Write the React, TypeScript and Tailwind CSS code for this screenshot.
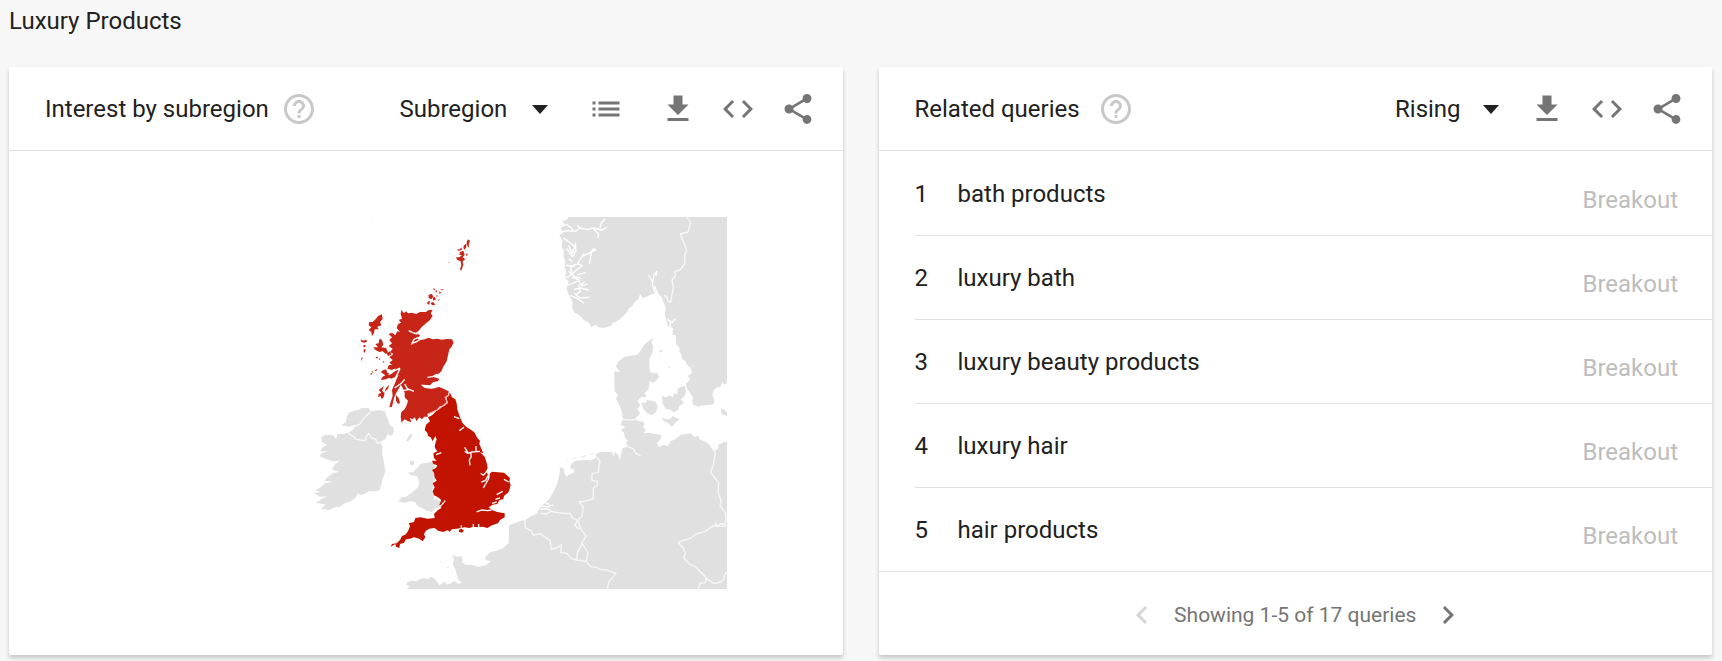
import { ReactNode } from "react";
import {
  MdChevronLeft,
  MdChevronRight,
  MdCode,
  MdFileDownload,
  MdHelpOutline,
  MdList,
  MdShare,
} from "react-icons/md";

interface Query {
  rank: number;
  text: string;
  value: string;
}

const queries: Query[] = [
  { rank: 1, text: "bath products", value: "Breakout" },
  { rank: 2, text: "luxury bath", value: "Breakout" },
  { rank: 3, text: "luxury beauty products", value: "Breakout" },
  { rank: 4, text: "luxury hair", value: "Breakout" },
  { rank: 5, text: "hair products", value: "Breakout" },
];

// countries without data
const land = [
  // Norway and Sweden
  "M806 33L1281 33L1281 528L1275 536L1268 530L1262 538L1264 543L1250 544L1240 556L1237 566L1241 576L1243 588L1238 596L1222 597L1205 599L1196 602L1180 597L1176 584L1180 577L1170 560L1160 545L1157 532L1165 527L1172 520L1163 510L1175 502L1173 485L1164 480L1156 466L1146 458L1144 445L1138 438L1139 424L1130 418L1128 402L1127 388L1118 386L1118 366L1104 360L1100 344L1094 324L1098 306L1090 288L1084 272L1076 264L1070 250L1064 262L1052 266L1040 272L1028 276L1020 264L1016 278L1004 288L998 300L988 306L980 320L968 332L956 342L942 350L938 348L936 358L924 362L912 366L896 364L888 356L880 360L874 364L868 352L852 342L838 328L824 320L816 304L818 288L812 276L804 262L800 246L806 228L796 214L798 198L794 182L796 166L790 150L792 136L784 120L788 104L778 88L790 80L782 66L796 58L786 46L800 42Z",
  // Jutland, Germany and the mainland down to Brittany
  "M1062 394L1054 410L1060 420L1057 442L1048 458L1048 484L1050 498L1062 502L1072 501L1077 512L1070 522L1062 530L1048 526L1046 548L1034 562L1040 572L1022 574L1012 586L1022 598L1012 608L1020 622L1006 638L1014 646L1030 646L1034 656L1028 664L1038 672L1030 682L1048 680L1062 684L1084 686L1082 700L1070 712L1078 722L1092 716L1104 720L1112 706L1126 700L1142 686L1160 684L1172 682L1182 692L1196 690L1198 700L1212 706L1222 710L1230 720L1240 734L1254 728L1256 716L1268 710L1281 706L1281 1151L318 1151L330 1140L318 1138L322 1128L338 1124L350 1126L360 1120L372 1116L384 1120L392 1112L404 1118L412 1128L418 1138L434 1128L442 1136L456 1130L462 1124L474 1134L486 1130L474 1120L470 1104L466 1088L458 1076L462 1060L456 1046L470 1052L484 1050L488 1058L486 1068L496 1076L514 1076L536 1082L556 1078L574 1066L556 1062L556 1052L572 1038L590 1034L610 1026L626 1012L627 958L652 948L674 942L694 930L712 922L716 912L722 902L738 888L750 876L762 854L772 832L778 808L780 786L786 784L792 790L794 804L800 812L806 806L820 802L824 792L810 786L812 776L826 764L850 762L874 762L886 756L890 742L904 738L936 738L940 752L944 738L956 748L960 766L962 748L968 726L984 722L978 712L984 704L974 694L972 680L962 672L976 664L962 656L968 642L966 618L958 598L948 578L954 568L944 556L943 496L960 498L948 482L956 466L974 452L1000 448L1012 446L1022 434L1034 414L1048 404Z",
  // Funen, Zealand and the small Danish islands
  "M1024 588L1036 592L1042 582L1056 584L1068 588L1073 602L1068 618L1056 628L1042 622L1030 610Z",
  "M1086 570L1098 574L1110 568L1118 574L1122 562L1134 564L1132 550L1142 542L1154 540L1158 556L1154 570L1142 580L1152 590L1138 600L1134 612L1122 620L1114 612L1096 608L1088 592Z",
  "M1084 634L1098 640L1112 638L1118 630L1138 640L1128 648L1116 662L1104 652L1090 644Z",
  "M1076 434L1090 432L1082 440ZM1264 606L1281 618L1281 630L1264 624ZM1104 484L1114 484L1108 487Z",
  // Ireland
  "M64 692L78 686L100 688L108 700L112 684L130 684L150 678L162 668L168 656L148 662L124 658L138 648L140 634L146 620L162 614L176 612L186 606L206 606L212 616L236 612L254 616L258 626L264 640L268 656L280 664L282 678L274 690L262 684L256 700L240 708L248 722L246 742L250 758L256 796L248 820L240 852L224 856L208 856L196 862L184 868L174 862L166 876L152 886L134 892L120 902L104 904L88 912L72 910L62 908L78 896L56 892L46 892L66 878L82 870L60 872L42 862L64 856L44 854L64 842L74 832L100 828L72 824L84 812L98 802L118 798L96 790L104 776L120 764L98 766L76 758L58 750L64 742L84 736L62 736L68 724L80 716L66 708Z",
  // Wales
  "M324 800L340 798L350 788L362 774L378 770L398 768L404 780L406 810L402 830L398 852L404 878L422 886L418 904L404 908L396 918L380 914L366 906L352 900L346 888L330 886L312 890L294 886L304 880L296 876L318 872L338 858L354 844L358 828L352 810L334 808Z",
  "M328 764L342 766L342 776L332 778Z",
  // Isle of Man, Channel Islands, Faroes
  "M318 704L328 688L338 682L334 696L324 706ZM420 1064L426 1068L422 1068ZM438 1082L450 1083L442 1085ZM214 34L224 42L218 38Z",
  // Frisian islands
  "M798 764L806 760L802 764ZM814 758L830 754L826 758ZM836 752L860 748L854 752ZM866 746L884 740L880 744Z",
];

const scotland = [
  "M304 312L312 322L318 316L324 322L336 320L348 324L360 318L378 318L386 312L398 312L392 322L398 330L390 342L378 352L366 362L356 374L348 380L360 388L352 398L362 402L374 400L386 395L398 400L412 398L426 401L440 399L456 400L461 410L454 424L448 430L444 448L440 466L430 482L424 496L412 506L398 512L418 518L414 526L400 528L390 538L372 536L362 536L374 546L394 548L408 546L416 542L430 548L446 556L446 566L438 574L440 588L430 600L420 600L410 612L396 618L382 624L384 632L372 632L366 640L358 634L350 646L344 634L338 640L330 636L334 648L324 646L314 640L306 648L310 660L304 646L302 632L304 618L314 610L320 598L324 584L314 574L314 560L308 546L302 536L296 548L288 562L282 576L276 602L268 604L272 588L278 570L276 552L284 534L290 518L296 506L284 514L274 518L262 512L278 500L288 488L276 490L264 484L278 478L268 470L278 462L268 454L280 444L270 438L278 428L266 420L276 412L268 402L276 394L266 384L276 380L286 388L292 376L300 378L290 366L294 354L304 350L296 342L306 338L302 324Z",
  // Outer Hebrides
  "M246 325L248 340L240 348L244 358L232 362L236 370L224 370L222 382L216 390L214 378L206 372L214 364L206 358L208 348L218 348L228 338L234 330Z",
  "M182 400L190 404L198 401L202 406L194 410L184 408ZM190 418L196 416L196 424L191 424ZM191 430L197 430L195 440L191 438ZM184 456L189 454L184 466Z",
  // Skye, Mull, Islay, Jura
  "M238 398L246 402L250 416L244 424L258 426L264 438L258 444L248 436L238 438L226 432L220 424L234 424L226 414L236 412ZM260 442L270 436L274 446L264 450Z",
  "M242 498L250 492L258 490L262 500L274 504L270 514L258 520L242 522L248 512L256 508ZM266 478L278 476L288 484L276 492L262 488Z",
  "M252 540L246 554L254 562L250 576L244 578L242 570L234 574L236 564L244 560L236 552L244 546ZM268 536L264 548L254 558L258 546ZM288 568L296 576L300 590L294 594L288 584Z",
  "M210 504L220 498L214 506ZM222 496L232 488L230 494ZM226 454L234 452L232 458ZM236 456L242 460L238 462ZM248 464L254 468L250 470ZM214 496L220 494L216 498Z",
  // Orkney
  "M386 266L396 264L400 272L394 280L386 276ZM398 276L404 272L408 280L400 284ZM382 288L390 284L388 296L382 294ZM392 290L400 288L406 296L396 298ZM400 246L406 250L402 254ZM406 256L412 252L410 260ZM420 250L432 250L426 253ZM418 256L424 260L418 264ZM408 270L412 266L412 274ZM412 282L420 280L416 284Z",
  // Shetland
  "M504 100L510 104L506 116L508 126L502 120L500 108ZM494 116L500 112L498 126L492 132L490 122ZM480 130L484 124L486 132L474 134L472 130ZM480 138L490 134L494 146L488 154L496 160L488 166L490 176L484 194L480 190L484 178L482 166L472 162L468 154L478 154L486 148L478 146ZM496 142L504 146L500 150ZM445 168L449 170L446 171Z",
];

const england = [
  "M450 560L456 574L466 580L470 592L472 610L480 634L488 652L500 664L514 672L524 680L532 696L540 704L538 714L550 742L540 738L554 752L560 770L563 786L558 796L564 806L576 797L612 800L630 816L628 826L632 838L626 858L612 870L610 880L598 882L592 894L578 896L566 904L576 912L592 918L614 922L614 934L600 942L594 952L576 958L562 966L548 962L534 964L520 962L508 966L494 964L484 966L470 968L456 970L448 978L444 972L430 978L414 974L404 966L388 968L378 974L372 984L376 994L368 1006L358 998L342 994L330 998L318 1000L312 1010L300 1014L298 1026L288 1022L286 1014L272 1022L276 1014L290 1012L300 1002L306 990L316 986L324 976L330 960L326 952L342 948L346 936L362 934L382 938L404 936L402 924L414 912L424 906L418 896L424 882L414 874L402 868L398 856L404 844L398 832L410 824L404 814L402 800L396 792L408 786L412 778L400 774L396 764L410 764L402 756L400 742L412 736L404 724L406 712L410 700L406 690L398 706L392 694L384 690L382 680L374 672L378 656L390 646L384 634L396 628L410 614L424 604L438 596L442 588L440 574Z",
  // Isle of Wight
  "M476 972L484 968L492 974L486 980L478 978Z",
];

// country borders
const borders = [
  "M1160 33L1172 50L1164 78L1141 84L1160 132L1154 150L1154 174L1140 192L1124 196L1126 210L1116 222L1120 246L1112 288L1104 286L1100 272L1092 268",
  "M966 640L990 642L1010 640L1030 646",
  "M982 722L1000 728L1008 742L1022 750",
  "M886 750L900 764L896 788L894 800L876 802L876 824L892 826L892 838L880 846L880 878L862 884L838 888L850 904L846 930L834 944L824 956L832 966L842 968L858 990L846 1010L842 1022L832 1040L830 1060",
  "M722 922L740 924L752 916L774 920L792 922L810 922L818 936L834 944L842 968",
  "M674 942L676 966L694 974L700 988L720 982L736 994L750 1002L754 1030L774 1024L784 1016L782 1040L800 1042L814 1058L830 1062L858 1066L872 1082L890 1084L898 1090L920 1092L948 1102L926 1128L922 1151",
  "M846 1012L858 1030L864 1042L858 1066",
  "M1240 712L1246 742L1240 776L1232 800L1256 830L1254 856L1264 888L1260 900L1276 920L1278 940L1272 962L1244 958L1236 962L1216 976L1188 984L1170 998L1140 1006L1136 1012L1148 1024L1156 1040L1152 1056L1170 1076L1186 1082L1220 1116L1216 1130L1200 1132L1194 1151",
  "M1246 950L1252 962L1264 952L1281 960",
  "M1220 1118L1242 1132L1256 1130L1270 1122L1274 1106L1281 1098",
  "M142 676L152 688L162 692L168 700L180 702L196 704L200 690L206 682L214 696L228 700L230 710L248 710",
  "M148 672L160 662L180 654L192 636L212 618",
];

// fjords, firths and estuaries
const inlets = [
  "M784 78L804 74L826 76L840 66L862 70L880 66L906 72L920 64M880 68L896 84L894 96M900 66L904 50L916 38M840 66L832 58M820 74L812 64L796 54",
  "M790 96L808 108L826 124L814 138L806 118M826 110L828 136L812 142M800 128L818 152L826 140",
  "M798 178L816 180L832 174L846 152L866 142L890 130M874 140L868 174M846 152L852 142M818 168L806 158M870 140L884 126",
  "M800 214L816 204L832 190L846 180L832 172M816 204L812 186L824 178M832 206L858 200M816 214L838 222M806 196L824 212L842 216",
  "M800 238L818 232L836 224L846 240L862 234M822 250L842 246L866 252M836 236L840 258L828 266M810 268L830 276L852 292M822 262L840 276L868 274M842 240L854 226",
  "M1064 258L1058 240L1056 224L1046 208M1058 230L1062 206L1070 196L1068 210M1064 240L1070 258M1102 340L1116 350L1126 338M1110 344L1112 374L1120 368",
  "M720 910L736 908L752 912M724 900L744 902L760 896M736 890L748 896",
  "M352 384L338 380L326 374M334 416L342 400L356 394M334 412L348 408L360 400",
  "M382 514L398 512L412 504M266 506L284 494L300 486M286 516L300 488M284 546L304 532L314 520M314 534L322 548L342 556M304 546L310 554L328 550",
  "M494 736L504 742L516 738L540 736M512 738L514 752L508 762L510 778M504 740L494 724M528 738L528 720M478 674L492 664M462 632L478 638",
  "M568 800L566 818L550 846M560 796L550 808L542 802M566 806L556 824L544 828M530 918L546 912L562 914L574 912M612 820L626 828M408 746L424 740M420 902L436 884",
  "M608 856L590 866M600 876L586 880M590 888L576 892M520 954L520 966M536 954L536 966M484 958L484 966",
];

function HeaderSelect({ label, options, width }: { label: string; options: string[]; width: string }) {
  return (
    <div className={`relative ${width}`}>
      <select
        aria-label={label}
        className="w-full appearance-none bg-transparent text-2xl leading-8 text-[#212121] focus:outline-none"
      >
        {options.map((option) => (
          <option key={option}>{option}</option>
        ))}
      </select>
      <svg
        viewBox="0 0 16 9"
        className="pointer-events-none absolute right-5 top-3 h-[9px] w-4 fill-[#212121]"
      >
        <path d="M0 0h16L8 9z" />
      </svg>
    </div>
  );
}

function IconButton({ label, children }: { label: string; children: ReactNode }) {
  return (
    <button type="button" aria-label={label} className="shrink-0 cursor-pointer text-4xl text-[#757575]">
      {children}
    </button>
  );
}

function ShareButtons() {
  return (
    <div className="flex items-center gap-6">
      <IconButton label="Download">
        <MdFileDownload />
      </IconButton>
      <IconButton label="Embed">
        <MdCode />
      </IconButton>
      <IconButton label="Share">
        <MdShare />
      </IconButton>
    </div>
  );
}

function CardHeader({ title, gap, children }: { title: string; gap: string; children: ReactNode }) {
  return (
    <header className="flex h-21 items-center justify-between border-b border-[#e0e0e0] pl-9 pr-[27px]">
      <div className={`flex items-center ${gap}`}>
        <h2 className="whitespace-nowrap text-2xl leading-8">{title}</h2>
        <button type="button" aria-label={`About ${title}`} className="cursor-pointer text-4xl text-[#c8c8c8]">
          <MdHelpOutline />
        </button>
      </div>
      <div className="flex items-center">{children}</div>
    </header>
  );
}

function SubregionMap() {
  return (
    <svg
      viewBox="-525 33 1806 1118"
      role="img"
      aria-label="Interest by subregion"
      className="h-auto w-full max-w-[602px]"
    >
      <g fill="#e0e0e0">
        {land.map((d) => (
          <path key={d} d={d} />
        ))}
      </g>
      <g fill="#c62518">
        {scotland.map((d) => (
          <path key={d} d={d} />
        ))}
      </g>
      <g fill="#c21300">
        {england.map((d) => (
          <path key={d} d={d} />
        ))}
      </g>
      <g fill="none" stroke="#ffffff" strokeWidth="4" strokeLinejoin="round">
        {inlets.map((d) => (
          <path key={d} d={d} />
        ))}
      </g>
      <g fill="none" stroke="#f8f8f8" strokeWidth="4" strokeLinejoin="round">
        {borders.map((d) => (
          <path key={d} d={d} />
        ))}
      </g>
      <path
        d="M446 560L446 568L436 574L442 590L428 600L412 612L398 618L384 624"
        fill="none"
        stroke="#f3b8b2"
        strokeWidth="4"
      />
    </svg>
  );
}

export default function App() {
  return (
    <div className="min-h-screen bg-[#f7f7f7] pb-1.5 pl-[9px] pr-2.5 font-[Roboto,sans-serif] text-[#212121]">
      <h1 className="pb-7 pt-[3px] text-2xl leading-9">Luxury Products</h1>
      <main className="grid grid-cols-2 gap-9">
        <section className="flex flex-col rounded-xs bg-white shadow-[0_3px_4px_rgba(0,0,0,0.2)]">
          <CardHeader title="Interest by subregion" gap="gap-3">
            <HeaderSelect label="Resolution" options={["Subregion", "City"]} width="w-[168px]" />
            <div className="ml-5 mr-9 flex">
              <IconButton label="Show as list">
                <MdList />
              </IconButton>
            </div>
            <ShareButtons />
          </CardHeader>
          <div className="flex grow items-center justify-center">
            <SubregionMap />
          </div>
        </section>

        <section className="flex flex-col rounded-xs bg-white shadow-[0_3px_4px_rgba(0,0,0,0.2)]">
          <CardHeader title="Related queries" gap="gap-4.5">
            <HeaderSelect label="Sort queries" options={["Rising", "Top"]} width="w-[124px]" />
            <div className="ml-2.5">
              <ShareButtons />
            </div>
          </CardHeader>
          <ol className="border-b border-[#e0e0e0] pl-9 pt-px">
            {queries.map((query) => (
              <li
                key={query.rank}
                className="flex h-21 items-center border-b border-[#e0e0e0] pr-[34px] text-2xl leading-8 last:h-[83px] last:border-b-0"
              >
                <span className="w-[43px]">{query.rank}</span>
                <a href="#" className="grow">
                  {query.text}
                </a>
                <span className="pt-3 text-[#bdbdbd]">{query.value}</span>
              </li>
            ))}
          </ol>
          <nav aria-label="Pages" className="flex h-[83px] items-center justify-center gap-3.5 pt-0.5 text-[#757575]">
            <button type="button" aria-label="Previous" disabled className="text-4xl text-[#d6d6d6]">
              <MdChevronLeft />
            </button>
            <span className="text-[21px] leading-8">Showing 1-5 of 17 queries</span>
            <button type="button" aria-label="Next" className="cursor-pointer text-4xl">
              <MdChevronRight />
            </button>
          </nav>
        </section>
      </main>
    </div>
  );
}
